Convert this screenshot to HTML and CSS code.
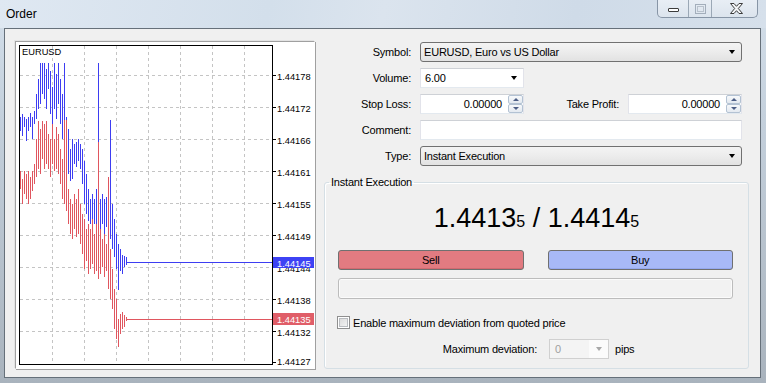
FILE: index.html
```html
<!DOCTYPE html>
<html>
<head>
<meta charset="utf-8">
<title>Order</title>
<link rel="stylesheet" href="styles.css">
</head>
<body>
<div class="window">
  <div class="titlebar">
    <span class="title">Order</span>
    <div class="caption-btns">
      <span class="cbtn min"><svg width="11" height="4" viewBox="0 0 11 4"><rect x="0.5" y="0.5" width="10" height="3" rx="0.5" fill="#fff" stroke="#3c3c3c"/></svg></span>
      <span class="cbtn max"><svg width="11" height="10" viewBox="0 0 11 10"><rect x="0.5" y="0.5" width="10" height="9" fill="none" stroke="#a3aebb"/><rect x="2.5" y="2.5" width="6" height="5" fill="none" stroke="#b8c1cc"/></svg></span>
      <span class="cbtn close"><svg width="15" height="11" viewBox="0 0 15 11"><path d="M1.5 0.5H5L7.5 3.3L10 0.5H13.5L9.3 5.5L13.5 10.5H10L7.5 7.7L5 10.5H1.5L5.7 5.5Z" fill="#f4f6f8" stroke="#3b3b3b"/></svg></span>
    </div>
  </div>
  <div class="client">
    <div class="chart-frame">
      <svg class="chart" width="298" height="326" viewBox="16 43 298 326">
        <rect x="16" y="43" width="298" height="326" fill="#fff"/>
        <g stroke="#c4c4c4" stroke-dasharray="3 3" fill="none">
          <path d="M52.5 47V365M84.5 47V365M116.5 47V365M148.5 47V365M180.5 47V365M212.5 47V365M244.5 47V365"/>
          <path d="M20 76.5H272M20 108.5H272M20 140.5H272M20 172.5H272M20 204.5H272M20 236.5H272M20 268.5H272M20 300.5H272M20 332.5H272"/>
        </g>
        <text class="sym" x="22" y="56">EURUSD</text>
        <path stroke="#3d3df2" fill="none" d="M20.5 118V132M22.5 115V137M24.5 118V128M26.5 120V142M28.5 118V132M30.5 114V128M32.5 118V140M34.5 112V125M36.5 95V120M38.5 80V110M40.5 64V105M42.5 64V95M44.5 64V100M46.5 70V110M48.5 64V90M50.5 72V115M52.5 88V140M54.5 64V110M56.5 75V120M58.5 64V105M60.5 80V125M62.5 95V140M64.5 64V135M66.5 118V182M68.5 130V175M70.5 150V182M72.5 140V180M74.5 145V165M76.5 143V168M78.5 140V162M80.5 145V170M82.5 150V185M84.5 162V205M86.5 175V215M88.5 190V222M90.5 200V225M92.5 195V230M94.5 200V225M96.5 190V232M98.5 64V228M100.5 200V232M102.5 195V225M104.5 200V235M106.5 198V228M108.5 205V238M110.5 121V240M112.5 205V250M114.5 220V258M116.5 235V270M118.5 245V291M120.5 250V272M122.5 256V275M124.5 257V268M126.5 258V266M126 263.5H272"/>
        <path stroke="#e0565f" fill="none" d="M20.5 172V190M22.5 180V205M24.5 172V195M26.5 175V200M28.5 172V205M30.5 178V200M32.5 172V192M34.5 165V185M36.5 140V178M38.5 122V170M40.5 130V175M42.5 122V160M44.5 125V170M46.5 122V165M48.5 135V170M50.5 140V178M52.5 125V165M54.5 140V172M56.5 128V170M58.5 135V175M60.5 150V185M62.5 160V200M64.5 121V205M66.5 121V212M68.5 190V225M70.5 200V235M72.5 205V240M74.5 195V230M76.5 200V238M78.5 190V235M80.5 205V245M82.5 215V255M84.5 220V270M86.5 230V262M88.5 225V275M90.5 230V270M92.5 220V265M94.5 235V275M96.5 225V272M98.5 143V280M100.5 230V275M102.5 240V268M104.5 235V278M106.5 245V272M108.5 178V290M110.5 250V300M112.5 270V310M114.5 290V330M116.5 300V340M118.5 320V348M120.5 315V335M122.5 313V330M124.5 316V328M126.5 318V322M126 320.5H272"/>
        <rect x="19.5" y="46.5" width="253" height="319" fill="none" stroke="#000"/>
        <path stroke="#000" d="M273 76.5H276M273 108.5H276M273 140.5H276M273 172.5H276M273 204.5H276M273 236.5H276M273 268.5H276M273 300.5H276M273 332.5H276M273 363.5H276"/>
        <g class="axis">
          <text x="277" y="80.5">1.44178</text>
          <text x="277" y="112.5">1.44172</text>
          <text x="277" y="144.5">1.44166</text>
          <text x="277" y="176.5">1.44161</text>
          <text x="277" y="208.5">1.44155</text>
          <text x="277" y="240.5">1.44149</text>
          <text x="277" y="272.5">1.44144</text>
          <text x="277" y="304.5">1.44138</text>
          <text x="277" y="336.5">1.44132</text>
          <text x="277" y="366">1.44127</text>
        </g>
        <rect x="273" y="258" width="41" height="11" fill="#3d42f4"/>
        <text class="tag" x="277" y="267.5">1.44145</text>
        <rect x="273" y="314" width="41" height="12" fill="#e05e68"/>
        <text class="tag" x="277" y="324">1.44135</text>
      </svg>
    </div>
    <div class="form">
      <div class="fields">
        <span class="lbl">Symbol:</span>
        <div class="combo"><span>EURUSD, Euro vs US Dollar</span><i class="arrow"></i></div>

        <span class="lbl">Volume:</span>
        <div class="edit combo-edit short"><span>6.00</span><i class="arrow"></i></div>

        <span class="lbl">Stop Loss:</span>
        <div class="pair">
          <div class="edit spinbox short"><span class="num">0.00000</span><span class="spin"><b class="up"></b><b class="down"></b></span></div>
          <span class="lbl tp">Take Profit:</span>
          <div class="edit spinbox tpbox"><span class="num">0.00000</span><span class="spin"><b class="up"></b><b class="down"></b></span></div>
        </div>

        <span class="lbl">Comment:</span>
        <div class="edit"></div>

        <span class="lbl">Type:</span>
        <div class="combo"><span>Instant Execution</span><i class="arrow"></i></div>
      </div>

      <fieldset class="group">
        <legend>Instant Execution</legend>
        <div class="price">1.4413<small>5</small> / 1.4414<small>5</small></div>
        <div class="actions">
          <div class="btn sell">Sell</div>
          <div class="btn buy">Buy</div>
        </div>
        <div class="progress"></div>
        <label class="check"><span class="box"></span>Enable maximum deviation from quoted price</label>
        <div class="deviation">
          <span class="dlbl">Maximum deviation:</span>
          <div class="dcombo"><span>0</span><span class="darr"><i></i></span></div>
          <span>pips</span>
        </div>
      </fieldset>
    </div>
  </div>
</div>
</body>
</html>
```
FILE: styles.css
```css
* { box-sizing: border-box; }
html, body { margin: 0; padding: 0; }
body {
  width: 766px;
  height: 383px;
  overflow: hidden;
  font-family: "Liberation Sans", Arial, sans-serif;
  font-size: 11px;
  letter-spacing: -0.2px;
  color: #000;
}
.window {
  width: 766px;
  height: 383px;
  display: flex;
  flex-direction: column;
  background: linear-gradient(180deg, #d4dfea 0, #c4d0dc 120px, #a9b3bd 383px);
}
.titlebar {
  height: 28px;
  flex: none;
  display: flex;
  align-items: flex-start;
  justify-content: space-between;
  background: linear-gradient(100deg, #dfe8f2 0%, #d3dfeb 35%, #dbe4ee 50%, #cfdbe8 75%, #d6e0eb 100%);
}
.title {
  font-size: 12px;
  letter-spacing: 0;
  line-height: 14px;
  padding: 7px 0 0 6px;
}
.caption-btns {
  display: flex;
  height: 18px;
  margin-right: 8px;
  border: 1px solid #8795a6;
  border-top: none;
  border-radius: 0 0 5px 5px;
  background: linear-gradient(#e8eef5, #dce4ed);
}
.cbtn { display: flex; align-items: center; justify-content: center; height: 100%; }
.cbtn.min { width: 31px; border-right: 1px solid #9ba8b6; padding-top: 3px; }
.cbtn.max { width: 23px; border-right: 1px solid #9ba8b6; }
.cbtn.close { width: 45px; padding-left: 4px; }

.client {
  flex: 1;
  margin: 0 5px 5px 4px;
  border: 1px solid #66707a;
  background: #f0f0f0;
  display: flex;
  gap: 9px;
  padding: 12px 0 0 10px;
}
.chart-frame {
  width: 300px;
  height: 328px;
  flex: none;
  border: 1px solid;
  border-color: #a0a0a0 #ffffff #ffffff #a0a0a0;
  box-shadow: -1px -1px 0 #e3e3e3, 1px 1px 0 #a0a0a0;
}
.chart { display: block; }
.chart text { font-family: "Liberation Sans", Arial, sans-serif; font-size: 9.3px; letter-spacing: 0; fill: #000; }
.chart .tag { fill: #fff; }

.form {
  width: 425px;
  flex: none;
  display: flex;
  flex-direction: column;
}
.fields {
  margin-top: 1px;
  display: grid;
  grid-template-columns: 87px 322px;
  grid-auto-rows: 20px;
  column-gap: 9px;
  row-gap: 6px;
}
.lbl { text-align: right; align-self: center; }
.combo {
  display: flex;
  align-items: center;
  justify-content: space-between;
  border: 1px solid #717171;
  border-radius: 3px;
  background: linear-gradient(#f4f4f4 0, #ececec 50%, #e2e2e2 100%);
  padding: 0 6px 0 3px;
}
.arrow {
  width: 0;
  height: 0;
  border-left: 3.5px solid transparent;
  border-right: 3.5px solid transparent;
  border-top: 4px solid #000;
}
.edit {
  background: #fff;
  border: 1px solid;
  border-color: #ced1d6 #e2e3ea #e3e9ef #e2e3ea;
  display: flex;
  align-items: center;
}
.short { width: 104px; }
.combo-edit { justify-content: space-between; padding: 0 6px 0 4px; }
.pair { display: flex; }
.pair .tp { width: 104px; padding-right: 9px; }
.tpbox { width: 114px; }
.spinbox { justify-content: flex-end; padding-right: 0; }
.num { padding-right: 6px; }
.spin {
  width: 15px;
  height: 18px;
  display: flex;
  flex-direction: column;
}
.spin b {
  flex: 1;
  border: 1px solid #b3c2d3;
  border-radius: 2px;
  background: linear-gradient(#f7f9fb, #e3e9f0);
  display: flex;
  align-items: center;
  justify-content: center;
}
.spin b::after {
  content: "";
  width: 0;
  height: 0;
  border-left: 3px solid transparent;
  border-right: 3px solid transparent;
}
.spin .up::after { border-bottom: 3px solid #4c5e86; }
.spin .down::after { border-top: 3px solid #4c5e86; }

.group {
  margin: 10px 0 0;
  padding: 0;
  min-width: 0;
  height: 193px;
  border: 1px solid #d5dfe5;
  border-radius: 3px;
  box-shadow: inset 1px 1px 0 #fff;
  display: flex;
  flex-direction: column;
}
.group legend {
  margin-left: 4px;
  padding: 0 2px;
  line-height: 13px;
}
.price {
  margin-top: 14px;
  text-align: center;
  font-size: 27px;
  line-height: 31px;
  letter-spacing: 0;
}
.price small { font-size: 16px; }
.actions {
  margin-top: 13px;
  display: flex;
  gap: 24px;
  padding: 0 15px 0 13px;
}
.btn {
  flex: 1;
  height: 20px;
  border: 1px solid #707070;
  border-radius: 3px;
  display: flex;
  align-items: center;
  justify-content: center;
}
.sell { background: #e27b81; box-shadow: inset 0 -1px 0 #d16a70; }
.buy { background: #a8b9f7; box-shadow: inset 0 -1px 0 #95a8ee; }
.progress {
  margin: 8px 15px 0 13px;
  height: 21px;
  border: 1px solid #bcbcbc;
  border-radius: 3px;
  background: #f2f2f2;
  box-shadow: inset 0 0 0 1px #fbfbfb;
}
.check {
  margin-top: 17px;
  padding-left: 12px;
  display: flex;
  align-items: center;
  gap: 3px;
  height: 13px;
}
.box {
  width: 13px;
  height: 13px;
  border: 1px solid #8f8f8f;
  background: linear-gradient(135deg, #d6d6d6, #f8f8f8);
  box-shadow: inset 0 0 0 1px #fff, inset 0 0 0 2px #b9bcc0;
}
.deviation {
  margin-top: 10px;
  display: flex;
  align-items: center;
  height: 20px;
}
.dlbl { width: 212px; text-align: right; }
.dcombo {
  margin: 0 6px 0 12px;
  width: 60px;
  height: 20px;
  border: 1px solid #d0d0d0;
  background: #f4f4f4;
  display: flex;
  align-items: center;
  color: #a0a0a0;
}
.dcombo span:first-child { flex: 1; padding-left: 5px; }
.darr {
  width: 19px;
  height: 100%;
  background: #fbfbfb;
  display: flex;
  align-items: center;
  justify-content: center;
}
.darr i {
  width: 0;
  height: 0;
  border-left: 3.5px solid transparent;
  border-right: 3.5px solid transparent;
  border-top: 4px solid #a8a8a8;
}
```
